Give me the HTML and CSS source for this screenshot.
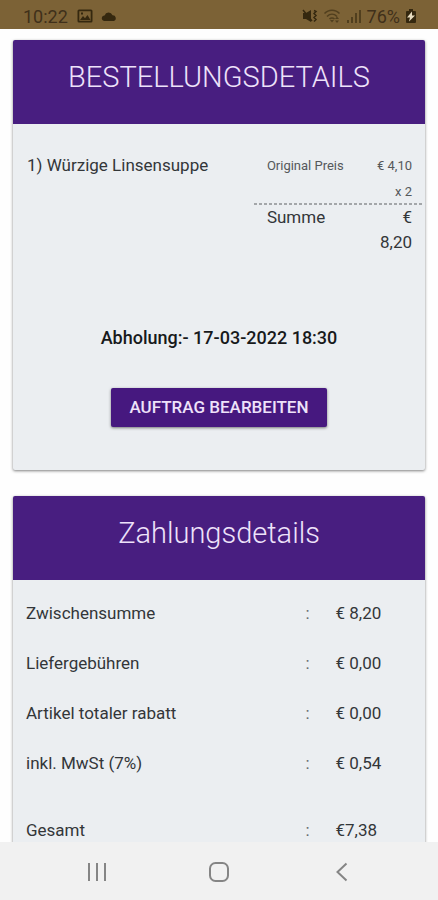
FILE: index.html
```html
<!DOCTYPE html>
<html lang="de">
<head>
<meta charset="utf-8">
<meta name="viewport" content="width=device-width, initial-scale=1">
<title>Bestelldetails</title>
<link rel="stylesheet" href="styles.css">
</head>
<body>
<header class="status">
  <div class="status-group">
    <span class="clock">10:22</span>
    <svg class="icon-image" width="16" height="14" viewBox="0 0 16 14"><path fill-rule="evenodd" d="M2 0.5h12a1.5 1.5 0 0 1 1.5 1.5v10a1.5 1.5 0 0 1-1.5 1.500h-12a1.500 1.500 0 0 1-1.500-1.500v-10a1.500 1.500 0 0 1 1.500-1.500zM2.300 2.300v9.400h11.400v-9.400zM3 11l3-4 2 2.200 2.500-3.200 3 5zM4 3.500h2v2h-2z"/></svg>
    <svg class="icon-cloud" width="16" height="11" viewBox="0 0 16 11"><path d="M3 10a2.800 2.800 0 0 1 0-5.500h.6a4.200 4.200 0 0 1 7.900-.3 3 3 0 0 1 1.300 5.800z"/></svg>
  </div>
  <div class="status-group status-right">
    <svg width="16" height="16" viewBox="0 0 16 16"><path d="M1 5h3l5-3v12l-5-3h-3z"/><path class="line" d="M1 2l9 11M12 2.500l2 1-2 2 2 2-2 2 2 2-2 2"/></svg>
    <svg class="dim" width="18" height="16" viewBox="0 0 18 16"><path class="line" d="M1.500 5.500c4-4.500 11-4.500 15 0M4 8.500c3-3 7-3 10 0M6.500 11c1.500-1.500 3.500-1.500 5 0"/><path d="M7 12l2 2.500 2-2.500zM12 11l2-2.500 2 2.500zM12 12.500h4l-2 2.500z"/></svg>
    <svg class="dim" width="16" height="16" viewBox="0 0 16 16"><path d="M1 12h2v3h-2zM5 9h2v6h-2zM9 5h2v10h-2zM13 2h2v13h-2z"/></svg>
    <span class="battery-text">76%</span>
    <svg width="12" height="16" viewBox="0 0 12 16"><path d="M4 1h4v2h2a1 1 0 0 1 1 1v10a1 1 0 0 1-1 1h-8a1 1 0 0 1-1-1v-10a1 1 0 0 1 1-1h2z"/><path class="bolt" d="M7 3.500l-5 6h3l-1 4 6-6h-3z"/></svg>
  </div>
</header>

<main class="content">
  <section class="card">
    <h1 class="card-title">BESTELLUNGSDETAILS</h1>
    <div class="order">
      <div class="item">
        <p class="item-name">1) Würzige Linsensuppe</p>
        <table class="prices">
          <tbody class="unit">
            <tr><th scope="row">Original Preis</th><td>€ 4,10</td></tr>
            <tr><th scope="row"></th><td>x 2</td></tr>
          </tbody>
          <tbody>
            <tr><th scope="row">Summe</th><td>€<br>8,20</td></tr>
          </tbody>
        </table>
      </div>
      <p class="pickup">Abholung:- 17-03-2022 18:30</p>
      <button class="edit" type="button">AUFTRAG BEARBEITEN</button>
    </div>
  </section>

  <section class="card">
    <h2 class="card-title">Zahlungsdetails</h2>
    <table class="payment">
      <tbody>
        <tr><th scope="row">Zwischensumme</th><td class="colon">:</td><td>€ 8,20</td></tr>
        <tr><th scope="row">Liefergebühren</th><td class="colon">:</td><td>€ 0,00</td></tr>
        <tr><th scope="row">Artikel totaler rabatt</th><td class="colon">:</td><td>€ 0,00</td></tr>
        <tr><th scope="row">inkl. MwSt (7%)</th><td class="colon">:</td><td>€ 0,54</td></tr>
        <tr class="total"><th scope="row">Gesamt</th><td class="colon">:</td><td>€7,38</td></tr>
      </tbody>
    </table>
  </section>
</main>

<nav class="navbar" aria-label="System">
  <button type="button" aria-label="Letzte Apps"><svg width="20" height="20" viewBox="0 0 20 20"><path d="M2 1v18M10 1v18M18 1v18"/></svg></button>
  <button type="button" aria-label="Startseite"><svg width="20" height="20" viewBox="0 0 20 20"><rect x="1" y="1" width="18" height="18" rx="5.500"/></svg></button>
  <button type="button" aria-label="Zurück"><svg width="20" height="20" viewBox="0 0 20 20"><path d="M15.500 1.500l-9 8.500 9 8.500"/></svg></button>
</nav>
</body>
</html>
```
FILE: styles.css
```css
* { box-sizing: border-box; }

body {
  display: flex;
  flex-direction: column;
  height: 100vh;
  margin: 0;
  overflow: hidden;
  background: #fefefe;
  color: #333639;
  font: 17px/25px Roboto, sans-serif;
}

h1, h2, p { margin: 0; }

table { border-collapse: collapse; }
th, td { padding: 0; font-weight: 400; text-align: left; vertical-align: top; }

.status {
  display: flex;
  flex: none;
  align-items: center;
  justify-content: space-between;
  height: 29px;
  padding: 3px 21px 0 23px;
  background: #7c6236;
  color: #40301a;
  font-size: 18px;
}
.status-group { display: flex; align-items: center; gap: 4px; }
.status-right { gap: 5px; }
.status svg { fill: #35280f; }
.status .line { fill: none; stroke: #35280f; stroke-width: 1.5; }
.status .dim { opacity: 0.6; }
.status .bolt { fill: #e8dcc0; }
.icon-image { margin: 0 4px 0 5px; }

.content {
  display: flex;
  flex: 1;
  flex-direction: column;
  gap: 26px;
  min-height: 0;
  padding: 11px 13px 0;
  overflow: hidden;
}

.card {
  flex: none;
  background: #ebeef1;
  border-radius: 2px;
  box-shadow: 0 1px 3px rgba(0, 0, 0, 0.5);
}
.card-title {
  height: 84px;
  padding-top: 17px;
  background: #481e80;
  border-radius: 2px 2px 0 0;
  color: #eee2fa;
  font-size: 29px;
  font-weight: 300;
  line-height: 40px;
  text-align: center;
}

.order {
  display: flex;
  flex-direction: column;
  align-items: center;
  padding: 29px 0 43px;
}
.item {
  display: flex;
  justify-content: space-between;
  width: 100%;
  padding-left: 14px;
}
.prices { width: 43%; }
.prices th { padding-left: 13px; }
.prices td { padding-right: 13px; text-align: right; }
.prices .unit {
  background: repeating-linear-gradient(90deg, #a3a6a9 0 3px, transparent 3px 5px) bottom / 100% 2px no-repeat;
  color: #55585b;
  font-size: 13px;
  line-height: 26px;
}

.pickup {
  margin-top: 70px;
  color: #17191b;
  font-size: 18px;
  font-weight: 500;
}
.edit {
  width: 216px;
  height: 39px;
  margin-top: 38px;
  padding: 0;
  background: #46187f;
  border: 0;
  border-radius: 2px;
  box-shadow: 0 1px 3px rgba(0, 0, 0, 0.5);
  color: #eee2fa;
  font: 500 17px/25px Roboto, sans-serif;
}

.payment { width: 100%; margin-top: 21px; }
.payment tr { height: 50px; }
.payment th { width: 71%; padding-left: 13px; }
.payment .colon { width: 30px; color: #66696c; }
.payment .total th, .payment .total td { padding-top: 17px; }

.navbar {
  display: flex;
  flex: none;
  align-items: center;
  justify-content: center;
  gap: 82px;
  height: 58px;
  padding-top: 2px;
  background: #f1f1f1;
}
.navbar button {
  display: flex;
  align-items: center;
  justify-content: center;
  width: 40px;
  height: 40px;
  padding: 0;
  background: none;
  border: 0;
}
.navbar svg { fill: none; stroke: #858585; stroke-width: 2; }
```
